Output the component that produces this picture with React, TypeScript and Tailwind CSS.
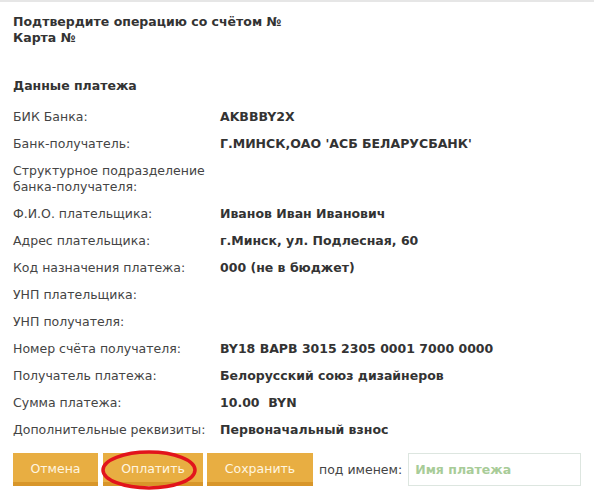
const rows: [string, string][] = [
  ["БИК Банка:", "AKBBBY2X"],
  ["Банк-получатель:", "Г.МИНСК,ОАО 'АСБ БЕЛАРУСБАНК'"],
  ["Структурное подразделение банка-получателя:", ""],
  ["Ф.И.О. плательщика:", "Иванов Иван Иванович"],
  ["Адрес плательщика:", "г.Минск, ул. Подлесная, 60"],
  ["Код назначения платежа:", "000 (не в бюджет)"],
  ["УНП плательщика:", ""],
  ["УНП получателя:", ""],
  ["Номер счёта получателя:", "BY18 BAPB 3015 2305 0001 7000 0000"],
  ["Получатель платежа:", "Белорусский союз дизайнеров"],
  ["Сумма платежа:", "10.00  BYN"],
  ["Дополнительные реквизиты:", "Первоначальный взнос"],
];

function Btn({ label }: { label: string }) {
  return (
    <button className="h-[33px] bg-[#e8ae42] border-b-[4px] border-[#d8962a] text-[#fff6e0] text-[12.5px] pt-[3px] w-full">
      {label}
    </button>
  );
}

export default function App() {
  return (
    <div className="w-[594px] h-[503px] bg-white border-t-[2px] border-[#e6e6e6] font-['DejaVu_Sans',Verdana,sans-serif] text-[12.5px] leading-[16px] text-[#333]">
      <div className="px-[13px] pt-[12px]">
        <div className="font-bold text-[#333]">
          <div>Подтвердите операцию со счётом №</div>
          <div>Карта №</div>
        </div>
        <div className="font-bold mt-[32px]">Данные платежа</div>
        <div className="mt-[15px] flex flex-col gap-[11px]">
          {rows.map(([k, v]) => (
            <div key={k} className="flex">
              <div className="w-[207px] text-[#444]">{k}</div>
              <div className="font-bold text-[#333] whitespace-pre">{v}</div>
            </div>
          ))}
        </div>
        <div className="mt-[15px] flex items-center">
          <div className="w-[85px]">
            <Btn label="Отмена" />
          </div>
          <div className="ml-[5px] w-[100px] relative">
            <Btn label="Оплатить" />
            <svg className="absolute left-[-3px] top-[-4px]" width="100" height="42" viewBox="0 0 100 42">
              <ellipse cx="49" cy="21" rx="46" ry="18" fill="none" stroke="#e2141c" strokeWidth="3.5" />
            </svg>
          </div>
          <div className="ml-[4px] w-[106px]">
            <Btn label="Сохранить" />
          </div>
          <span className="ml-[6px] text-[#444] whitespace-nowrap">под именем:</span>
          <input
            className="ml-[6px] flex-1 min-w-0 h-[33px] border border-[#dde6e0] px-[6px] text-[12.5px] font-bold placeholder:text-[#a8cc98] outline-none"
            placeholder="Имя платежа"
          />
        </div>
      </div>
    </div>
  );
}
